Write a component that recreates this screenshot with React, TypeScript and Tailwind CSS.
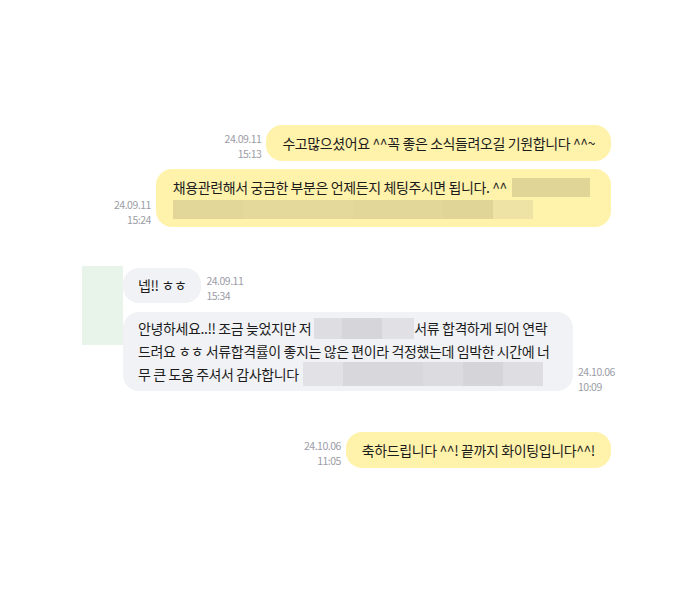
export default function App() {
  const font = "font-['Noto_Sans_CJK_KR','Noto_Sans',sans-serif]";

  const Time = ({ date, time, align }: { date: string; time: string; align: "left" | "right" }) => (
    <div
      className={`shrink-0 text-[10.5px] leading-[15px] tracking-[-0.5px] text-[#9c9ca6] ${
        align === "right" ? "text-right" : "text-left"
      }`}
    >
      <div>{date}</div>
      <div>{time}</div>
    </div>
  );

  return (
    <div className={`w-[700px] h-[600px] bg-white ${font}`}>
      <div className="ml-[82px] w-[529px] pt-[125px] flex flex-col text-[14px] tracking-[-0.4px] text-[#1c1c1c]">
        {/* sent 1 */}
        <div className="flex justify-end items-end gap-[5px]">
          <Time date="24.09.11" time="15:13" align="right" />
          <div className="bg-[#fff2ab] rounded-2xl px-4 py-[7px] leading-[22px] whitespace-nowrap">
            수고많으셨어요 ^^꼭 좋은 소식들려오길 기원합니다 ^^~
          </div>
        </div>

        {/* sent 2 */}
        <div className="mt-2 flex justify-end items-end gap-[5px]">
          <Time date="24.09.11" time="15:24" align="right" />
          <div className="bg-[#fff2ab] rounded-2xl pl-[17px] pr-[21px] py-[7px] leading-[22px] whitespace-nowrap">
            <div className="flex items-center">
              <span>채용관련해서 궁금한 부분은 언제든지 체팅주시면 됩니다. ^^</span>
              <span className="ml-[5px] inline-block w-[78px] h-[19px] bg-[#e0d596]" />
            </div>
            <div className="flex items-center h-[22px]">
              <span className="inline-block w-[70px] h-[19px] bg-[#e2d798]" />
              <span className="inline-block w-[110px] h-[19px] bg-[#e4d99a]" />
              <span className="inline-block w-[90px] h-[19px] bg-[#e2d798]" />
              <span className="inline-block w-[50px] h-[19px] bg-[#e0d596]" />
              <span className="inline-block w-[40px] h-[19px] bg-[#eee3a4]" />
            </div>
          </div>
        </div>

        {/* received */}
        <div className="mt-[39px] flex">
          <div className="w-[41px] h-[79px] shrink-0 bg-[#e8f4e9]" />
          <div className="flex flex-col pt-[2px]">
            <div className="flex items-end gap-[5px]">
              <div className="bg-[#f1f2f5] rounded-2xl px-[15px] py-[7px] leading-[21px] whitespace-nowrap">
                넵!! ㅎㅎ
              </div>
              <Time date="24.09.11" time="15:34" align="left" />
            </div>
            <div className="mt-[9px] flex items-end gap-[5px]">
              <div className="w-[450px] bg-[#f1f2f5] rounded-2xl px-[15px] py-[5px] leading-[22.5px] whitespace-nowrap">
                <div className="flex items-center">
                  <span>안녕하세요..!! 조금 늦었지만 저 </span>
                  <span className="ml-[3px] inline-block w-[28px] h-[21px] bg-[#dedee2]" />
                  <span className="inline-block w-[40px] h-[21px] bg-[#d6d6da]" />
                  <span className="inline-block w-[32px] h-[21px] bg-[#e1e1e5]" />
                  <span>서류 합격하게 되어 연락</span>
                </div>
                <div>드려요 ㅎㅎ 서류합격률이 좋지는 않은 편이라 걱정했는데 임박한 시간에 너</div>
                <div className="flex items-center">
                  <span>무 큰 도움 주셔서 감사합니다 </span>
                  <span className="ml-[4px] inline-block w-[40px] h-[24px] bg-[#e2e2e6]" />
                  <span className="inline-block w-[80px] h-[24px] bg-[#d8d8dc]" />
                  <span className="inline-block w-[40px] h-[24px] bg-[#dcdce0]" />
                  <span className="inline-block w-[40px] h-[24px] bg-[#d5d5d9]" />
                  <span className="inline-block w-[40px] h-[24px] bg-[#dedee2]" />
                </div>
              </div>
              <div className="mb-[-3px]">
                <Time date="24.10.06" time="10:09" align="left" />
              </div>
            </div>
          </div>
        </div>

        {/* sent 3 */}
        <div className="mt-[41px] flex justify-end items-end gap-[5px]">
          <Time date="24.10.06" time="11:05" align="right" />
          <div className="bg-[#fff2ab] rounded-2xl px-4 py-[7px] leading-[22px] whitespace-nowrap">
            축하드립니다 ^^! 끝까지 화이팅입니다^^!
          </div>
        </div>
      </div>
    </div>
  );
}
